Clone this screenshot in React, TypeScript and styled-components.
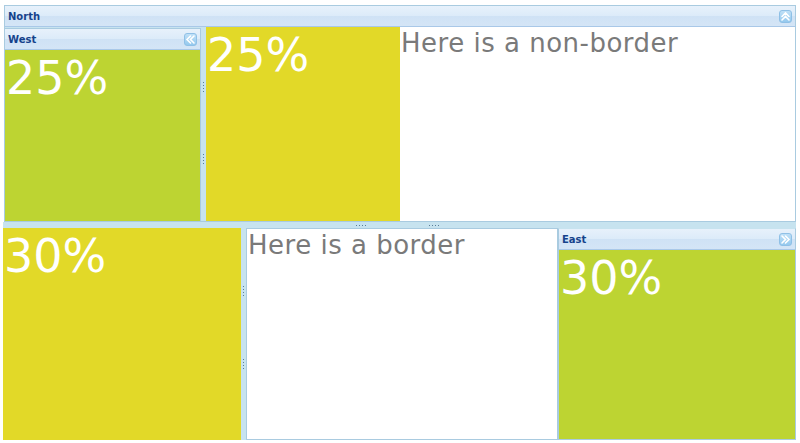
import styled, { createGlobalStyle } from 'styled-components';

const GlobalStyle = createGlobalStyle`
  html, body {
    margin: 0;
    padding: 0;
    background: #ffffff;
  }
  * {
    box-sizing: border-box;
  }
`;

type Dir = 'up' | 'left' | 'right';

const ToolIcon = ({ dir }: { dir: Dir }) => {
  const rotate = dir === 'up' ? 0 : dir === 'left' ? -90 : 90;
  return (
    <S.Tool>
      <svg width="11" height="11" viewBox="0 0 11 11" style={{ transform: `rotate(${rotate}deg)` }}>
        <path d="M2 5.5 L5.5 2 L9 5.5" fill="none" stroke="#ffffff" strokeWidth="1.6" strokeLinecap="round" />
        <path d="M2 9 L5.5 5.5 L9 9" fill="none" stroke="#ffffff" strokeWidth="1.6" strokeLinecap="round" />
      </svg>
    </S.Tool>
  );
};

const PanelHeader = ({ title, dir }: { title: string; dir: Dir }) => (
  <S.Header>
    <S.Title>{title}</S.Title>
    <ToolIcon dir={dir} />
  </S.Header>
);

const Grip = ({ vertical }: { vertical: boolean }) => (
  <S.Grip vertical={vertical}>
    {[0, 1, 2, 3].map((i) => (
      <S.Dot key={i} />
    ))}
  </S.Grip>
);

const App = () => {
  return (
    <>
      <GlobalStyle />
      <S.Viewport>
        <S.North>
          <PanelHeader title="North" dir="up" />
          <S.NorthBody>
            <S.West>
              <PanelHeader title="West" dir="left" />
              <S.Fill color="#bdd432">
                <S.Percent>25%</S.Percent>
              </S.Fill>
            </S.West>
            <S.VSplit start={55} gap={62}>
              <Grip vertical />
              <Grip vertical />
            </S.VSplit>
            <S.Fill color="#e2d928" width={194}>
              <S.Percent>25%</S.Percent>
            </S.Fill>
            <S.Fill color="#ffffff">
              <S.Note>Here is a non-border</S.Note>
            </S.Fill>
          </S.NorthBody>
        </S.North>
        <S.HSplit>
          <Grip vertical={false} />
          <Grip vertical={false} />
        </S.HSplit>
        <S.South>
          <S.Fill color="#e2d928" width={238}>
            <S.Percent>30%</S.Percent>
          </S.Fill>
          <S.VSplit start={58} gap={63}>
            <Grip vertical />
            <Grip vertical />
          </S.VSplit>
          <S.Bordered>
            <S.Note>Here is a border</S.Note>
          </S.Bordered>
          <S.East>
            <PanelHeader title="East" dir="right" />
            <S.Fill color="#bdd432">
              <S.Percent>30%</S.Percent>
            </S.Fill>
          </S.East>
        </S.South>
      </S.Viewport>
    </>
  );
};

const S = {
  Viewport: styled.div`
    display: flex;
    flex-direction: column;
    width: 800px;
    height: 443px;
    padding: 5px 4px 3px 3px;
    background: #ffffff;
    font-family: 'DejaVu Sans', Verdana, sans-serif;
  `,

  North: styled.div`
    display: flex;
    flex-direction: column;
    height: 217px;
    margin-left: 1px;
    border: 1px solid #a9cbe0;
    background: #c7e3ef;
  `,

  Header: styled.div`
    display: flex;
    align-items: center;
    justify-content: space-between;
    flex: none;
    height: 21px;
    padding: 0 3px 0 3px;
    border-bottom: 1px solid #a9c8e8;
    background: linear-gradient(to bottom, #e7f1fb 0%, #dcebf9 50%, #cfe2f5 51%, #d4e5f6 100%);
  `,

  Title: styled.span`
    color: #15428b;
    font-size: 10px;
    font-weight: bold;
  `,

  Tool: styled.span`
    display: flex;
    align-items: center;
    justify-content: center;
    width: 13px;
    height: 13px;
    border: 1px solid #8fc0e6;
    border-radius: 3px;
    background: linear-gradient(to bottom, #bfe0f7, #95c9ee);
  `,

  NorthBody: styled.div`
    display: flex;
    flex: 1;
    min-height: 0;
  `,

  West: styled.div`
    display: flex;
    flex-direction: column;
    width: 196px;
    margin-top: 1px;
    border: 1px solid #a9cbe0;
    border-left: none;
    border-bottom: none;
    background: #ffffff;
  `,

  East: styled.div`
    display: flex;
    flex-direction: column;
    flex: 1;
    border: 1px solid #a9cbe0;
    border-top: 1px solid #c7e3ef;
    background: #ffffff;
  `,

  Fill: styled.div<{ color: string; width?: number }>`
    flex: ${(props) => (props.width ? 'none' : '1')};
    width: ${(props) => (props.width ? `${props.width}px` : 'auto')};
    min-width: 0;
    overflow: hidden;
    background: ${(props) => props.color};
  `,

  Bordered: styled.div`
    width: 312px;
    overflow: hidden;
    border: 1px solid #a9cbe0;
    background: #ffffff;
  `,

  Percent: styled.div`
    padding-left: 1px;
    color: #ffffff;
    font-size: 46px;
    line-height: 56px;
  `,

  Note: styled.div`
    padding-left: 1px;
    padding-top: 2px;
    color: #7a7a7a;
    font-size: 26px;
    letter-spacing: 0.5px;
    line-height: 29px;
  `,

  VSplit: styled.div<{ start: number; gap: number }>`
    display: flex;
    flex-direction: column;
    align-items: center;
    gap: ${(props) => props.gap}px;
    flex: none;
    width: 5px;
    padding-top: ${(props) => props.start}px;
    background: #c7e3ef;
  `,

  HSplit: styled.div`
    display: flex;
    align-items: center;
    gap: 63px;
    flex: none;
    height: 6px;
    padding-left: 353px;
    background: #c7e3ef;
  `,

  South: styled.div`
    display: flex;
    flex: 1;
    min-height: 0;
    background: #c7e3ef;
  `,

  Grip: styled.div<{ vertical: boolean }>`
    display: flex;
    flex-direction: ${(props) => (props.vertical ? 'column' : 'row')};
    gap: 2px;
  `,

  Dot: styled.span`
    display: block;
    width: 1px;
    height: 1px;
    background: #5a7d99;
  `,
};

export default App;
